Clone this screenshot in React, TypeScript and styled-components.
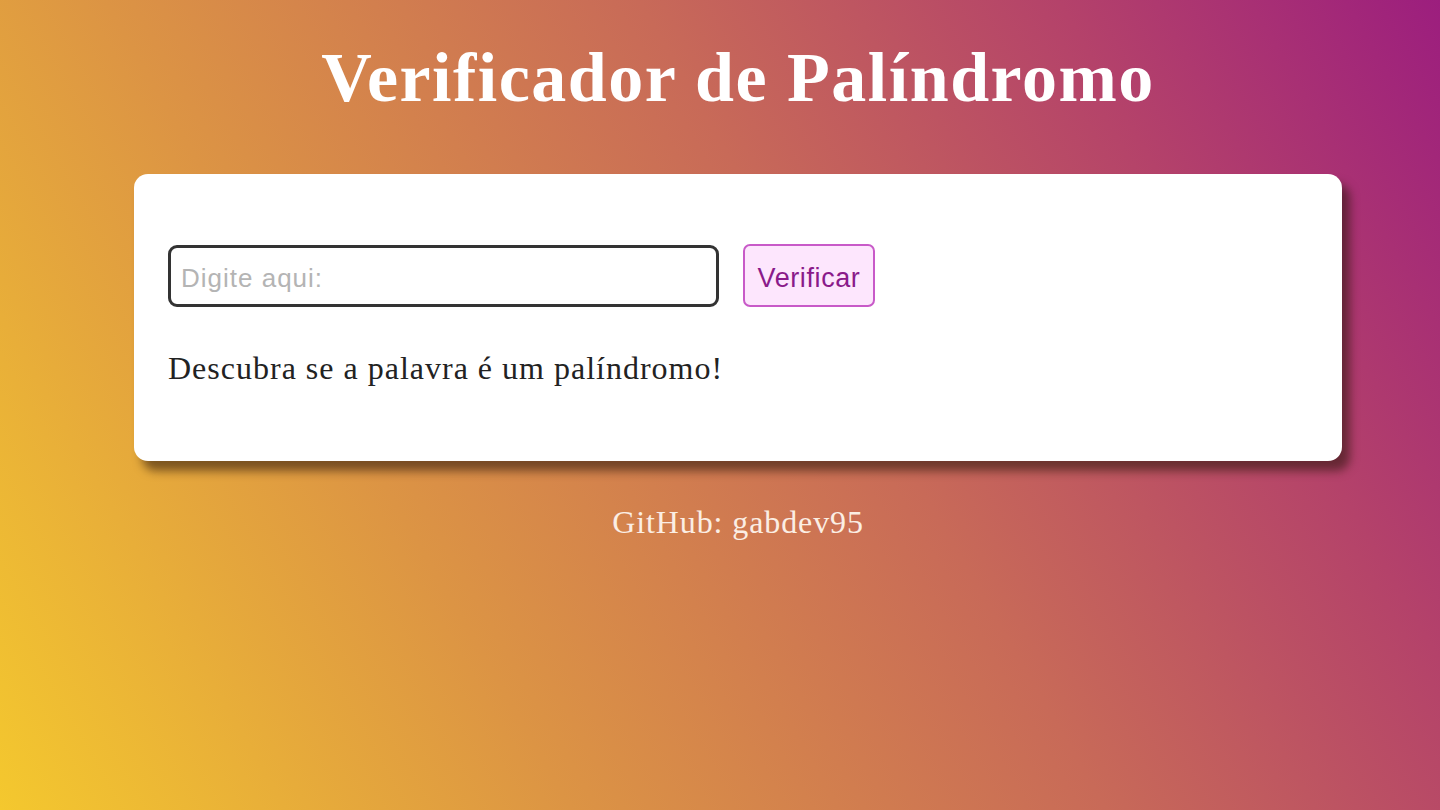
import React, { useState } from 'react';
import styled, { createGlobalStyle } from 'styled-components';

const GlobalStyle = createGlobalStyle`
  html, body {
    margin: 0;
    padding: 0;
  }
  body {
    font-family: 'Liberation Serif', 'Times New Roman', serif;
    min-height: 810px;
    background: linear-gradient(
      60deg,
      #f4c82e 0%,
      #dc9444 30%,
      #c86a58 58%,
      #b4426a 80%,
      #9c1e7e 100%
    );
  }
`;

const Page = styled.main`
  display: flex;
  flex-direction: column;
  align-items: center;
  padding: 0 0 0 36px;
  min-height: 810px;
  box-sizing: border-box;
`;

const Title = styled.h1`
  margin: 38px 0 56px;
  color: #ffffff;
  font-size: 70px;
  font-weight: bold;
  letter-spacing: 1.5px;
  line-height: 80px;
`;

const Card = styled.section`
  width: 1208px;
  height: 287px;
  box-sizing: border-box;
  padding: 70px 34px 0;
  background: #ffffff;
  border-radius: 14px;
  box-shadow: 8px 10px 10px rgba(40, 20, 10, 0.55);
`;

const Row = styled.div`
  display: flex;
  align-items: center;
  gap: 24px;
`;

const TextInput = styled.input`
  width: 551px;
  height: 62px;
  box-sizing: border-box;
  border: 3px solid #333333;
  border-radius: 9px;
  padding: 6px 10px 0;
  font-family: 'Liberation Sans', Arial, sans-serif;
  font-size: 26px;
  letter-spacing: 1px;
  color: #222;
  outline: none;

  &::placeholder {
    color: #b4b4b4;
  }
`;

const CheckButton = styled.button`
  width: 132px;
  height: 63px;
  box-sizing: border-box;
  padding: 6px 0 0;
  background: #fde6fd;
  border: 2px solid #c85ac8;
  border-radius: 7px;
  color: #8a1a8a;
  font-family: 'Liberation Sans', Arial, sans-serif;
  font-size: 27px;
  letter-spacing: 0.6px;
  cursor: pointer;
`;

const Message = styled.p`
  margin: 43px 0 0;
  font-size: 32px;
  letter-spacing: 1px;
  color: #222222;
`;

const Footer = styled.p`
  margin: 43px 0 0;
  color: #fbeee4;
  font-size: 32px;
  letter-spacing: 0.9px;
`;

const App: React.FC = () => {
  const [word, setWord] = useState('');
  const [message, setMessage] = useState('Descubra se a palavra é um palíndromo!');

  const check = () => {
    const clean = word.toLowerCase().replace(/[^a-z0-9à-ú]/g, '');
    if (!clean) {
      setMessage('Descubra se a palavra é um palíndromo!');
      return;
    }
    const reversed = clean.split('').reverse().join('');
    setMessage(
      clean === reversed
        ? `"${word}" é um palíndromo!`
        : `"${word}" não é um palíndromo.`
    );
  };

  return (
    <>
      <GlobalStyle />
      <Page>
        <Title>Verificador de Palíndromo</Title>
        <Card>
          <Row>
            <TextInput
              placeholder="Digite aqui:"
              value={word}
              onChange={(e) => setWord(e.target.value)}
            />
            <CheckButton onClick={check}>Verificar</CheckButton>
          </Row>
          <Message>{message}</Message>
        </Card>
        <Footer>GitHub: gabdev95</Footer>
      </Page>
    </>
  );
};

export default App;
